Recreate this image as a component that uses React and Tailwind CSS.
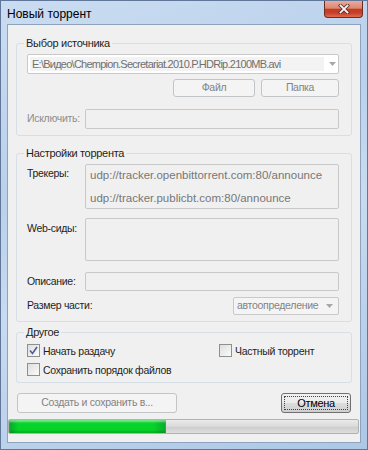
import React from "react";

const font = "font-['Segoe_UI','Liberation_Sans',Arial,sans-serif]";

function Group({ title, className = "", children }) {
  return (
    <fieldset className={`mx-[8px] min-w-0 rounded-[3px] border border-[#d5dfe5] pl-[10px] pr-[12px] pb-[6px] ${className}`}>
      <legend className="-ml-[3px] h-[16px] px-[2px] text-[11px] leading-[16px] text-[#1e1e1e]">{title}</legend>
      {children}
    </fieldset>
  );
}

function Box({ className = "", children }) {
  return (
    <div className={`rounded-[2px] border border-[#c9c9c9] bg-[#f0f0f0] ${className}`}>{children}</div>
  );
}

function Arrow() {
  return (
    <svg width="7" height="4" viewBox="0 0 7 4" className="shrink-0">
      <path d="M0 0H7L3.5 4Z" fill="#a8a8a8" />
    </svg>
  );
}

function Combo({ className = "", children }) {
  return (
    <div className={`flex items-center rounded-[2px] border border-[#c9c9c9] bg-white pl-[2px] pr-[2px] ${className}`}>
      <div className="flex h-[14px] min-w-0 flex-1 items-center overflow-hidden whitespace-nowrap bg-[#f3f3f3] pl-[2px] text-[11px] leading-[14px] tracking-[-0.75px] text-[#707070]">{children}</div>
      <div className="ml-[5px]"><Arrow /></div>
    </div>
  );
}

function Btn({ className = "", children }) {
  return (
    <div className={`flex items-center justify-center rounded-[3px] border border-[#c2c5c8] bg-[#f4f4f4] text-[#838383] ${className}`}>
      {children}
    </div>
  );
}

function Check({ checked, label }) {
  return (
    <div className="flex h-[13px] items-center gap-[3px]">
      <div className="flex h-[13px] w-[13px] items-center justify-center border border-[#8e8f8f] bg-[linear-gradient(135deg,#dedede,#fbfbfb)]">
        {checked && (
          <svg width="9" height="9" viewBox="0 0 9 9">
            <path d="M1 4.5L3.5 7.5L8 1" fill="none" stroke="#4a5f97" strokeWidth="1.6" />
          </svg>
        )}
      </div>
      <span className="leading-[16px] text-[#1e1e1e]">{label}</span>
    </div>
  );
}

export default function App() {
  return (
    <div className={`${font} flex h-[450px] w-[368px] flex-col overflow-hidden border border-[#60779a] bg-[linear-gradient(160deg,#cadcf1_0%,#b9d1eb_35%,#c8dbf0_55%,#adc7e5_100%)] text-[10.5px] tracking-[-0.3px]`}>
      {/* title bar */}
      <div className="flex h-[23px] items-start">
        <span className="ml-[6px] mt-[5px] flex-1 text-[12px] leading-[16px] tracking-normal text-black">Новый торрент</span>
        <div className="mr-[4px] flex h-[17px] w-[39px] items-center justify-center rounded-b-[4px] border border-t-0 border-[#6e2b22] bg-[linear-gradient(#e9ab9b_0%,#db8672_45%,#c43b20_52%,#c5402a_75%,#e46a4c_100%)]">
          <svg width="12" height="10" viewBox="0 0 12 10">
            <path d="M2.5 1.5L9.5 8.5M9.5 1.5L2.5 8.5" stroke="#5a2a24" strokeWidth="3.4" strokeLinecap="square" />
            <path d="M2.5 1.5L9.5 8.5M9.5 1.5L2.5 8.5" stroke="#f4f4f4" strokeWidth="1.8" strokeLinecap="square" />
          </svg>
        </div>
      </div>

      {/* client area */}
      <div className="mx-[6px] flex h-[419px] flex-col border border-[#8ea3bd] bg-[#f0f0f0]">
        <Group title="Выбор источника" className="mt-[10px]">
          <Combo className="mt-[3px] h-[20px]">{"E:\\Видео\\Chempion.Secretariat.2010.P.HDRip.2100MB.avi"}</Combo>
          <div className="mt-[5px] flex justify-end gap-[6px]">
            <Btn className="h-[18px] w-[82px]">Файл</Btn>
            <Btn className="h-[18px] w-[78px]">Папка</Btn>
          </div>
          <div className="mt-[12px] flex items-center">
            <span className="w-[58px] shrink-0 text-[#8d8d8d]">Исключить:</span>
            <Box className="h-[20px] flex-1" />
          </div>
        </Group>

        <Group title="Настройки торрента" className="mt-[9px]">
          <div className="mt-[3px] flex">
            <span className="w-[58px] shrink-0 pt-[1px] leading-[16px] text-[#1e1e1e]">Трекеры:</span>
            <Box className="flex h-[45px] flex-1 flex-col justify-between py-[2px] pl-[4px] text-[11.5px] leading-[16px] tracking-normal text-[#777777]">
              <span>udp://tracker.openbittorrent.com:80/announce</span>
              <span>udp://tracker.publicbt.com:80/announce</span>
            </Box>
          </div>
          <div className="mt-[9px] flex">
            <span className="w-[58px] shrink-0 pt-[2px] leading-[16px] text-[#1e1e1e]">Web-сиды:</span>
            <Box className="h-[43px] flex-1" />
          </div>
          <div className="mt-[11px] flex items-center">
            <span className="w-[58px] shrink-0 text-[#1e1e1e]">Описание:</span>
            <Box className="h-[19px] flex-1" />
          </div>
          <div className="mt-[6px] flex items-center">
            <span className="flex-1 text-[#1e1e1e]">Размер части:</span>
            <div className="flex h-[18px] w-[106px] items-center rounded-[2px] border border-[#c9c9c9] bg-[#f4f4f4] pl-[3px] pr-[5px] text-[#838383]">
              <span className="flex-1 whitespace-nowrap">автоопределение</span>
              <Arrow />
            </div>
          </div>
        </Group>

        <Group title="Другое" className="mt-[2px]">
          <div className="mt-[4px] grid grid-cols-[192px_1fr]">
            <Check checked label="Начать раздачу" />
            <Check label="Частный торрент" />
          </div>
          <div className="mt-[6px]">
            <Check label="Сохранить порядок файлов" />
          </div>
        </Group>

        <div className="mt-[10px] flex justify-between pl-[9px] pr-[9px]">
          <Btn className="h-[20px] w-[160px]">Создать и сохранить в...</Btn>
          <div className="flex h-[20px] w-[70px] items-center justify-center rounded-[3px] border border-[#707070] bg-[linear-gradient(#f2f2f2_0%,#ebebeb_50%,#dddddd_51%,#cfcfcf_100%)] p-[2px]">
            <div className="flex h-full w-full items-center justify-center border border-dotted border-[#444] text-[11px] text-black">Отмена</div>
          </div>
        </div>

        <div className="mr-[1px] mt-[6px] flex h-[15px] overflow-hidden rounded-[2px] border border-[#b2b2b2] bg-[linear-gradient(#eaeaea,#d9d9d9_50%,#cbcbcb_51%,#dedede)]">
          <div className="h-full w-[157px] bg-[linear-gradient(90deg,#0aa32a_0%,#06d32a_6%,#06d32a_92%,#0ba82e_100%)] shadow-[inset_0_2px_2px_rgba(255,255,255,0.45),inset_0_-2px_2px_rgba(0,80,0,0.25)]" />
        </div>
      </div>
    </div>
  );
}
